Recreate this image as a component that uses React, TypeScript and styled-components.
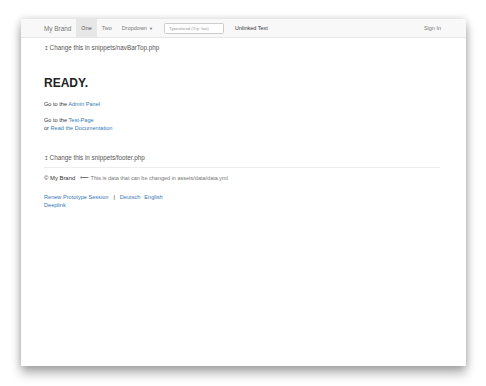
import styled, { createGlobalStyle } from 'styled-components';

const GlobalStyle = createGlobalStyle`
  html, body {
    margin: 0;
    padding: 0;
    background: #ffffff;
  }
  body {
    font-family: "Liberation Sans", Arial, sans-serif;
    color: #333333;
  }
`;

const Stage = styled.div`
  width: 486px;
  height: 386px;
  padding: 19px 20px 20px 21px;
  box-sizing: border-box;
`;

const Window = styled.div`
  width: 445px;
  height: 347px;
  background: #ffffff;
  box-shadow: 0 7px 10px rgba(0, 0, 0, 0.32), 0 0 7px rgba(0, 0, 0, 0.16);
  overflow: hidden;
`;

const NavBar = styled.nav`
  height: 18px;
  background: #f8f8f8;
  border-bottom: 1px solid #e7e7e7;
  display: flex;
  align-items: stretch;
  padding: 0 20px 0 23px;
  font-size: 5.5px;
`;

const Brand = styled.a`
  display: flex;
  align-items: center;
  font-size: 6.4px;
  color: #777777;
  margin-right: 5px;
`;

const NavLink = styled.a<{ $active?: boolean }>`
  display: flex;
  align-items: center;
  padding: 0 5px;
  color: ${(p) => (p.$active ? '#555555' : '#777777')};
  background: ${(p) => (p.$active ? '#e7e7e7' : 'transparent')};
`;

const Caret = styled.span`
  font-size: 4px;
  margin-left: 2px;
`;

const SearchForm = styled.form`
  display: flex;
  align-items: center;
  margin: 0 11px 0 6px;
`;

const SearchInput = styled.input`
  width: 60px;
  height: 11px;
  box-sizing: border-box;
  border: 1px solid #cccccc;
  border-radius: 1.5px;
  padding: 0 4px;
  font-family: "Liberation Sans", Arial, sans-serif;
  font-size: 4.3px;
  background: #ffffff;
  outline: none;
  &::placeholder {
    color: #999999;
  }
`;

const NavText = styled.span`
  display: flex;
  align-items: center;
  color: #333333;
`;

const Spacer = styled.div`
  flex: 1;
`;

const Content = styled.main`
  padding: 0 26px 0 23px;
  font-size: 5.6px;
  line-height: 8px;
`;

const SnippetNote = styled.div<{ $top: number }>`
  margin-top: ${(p) => p.$top}px;
  font-size: 6.3px;
  color: #555555;
`;

const Arrow = styled.span`
  font-family: "DejaVu Sans", sans-serif;
  font-size: 5.5px;
  margin-right: 1px;
`;

const Heading = styled.h1`
  margin: 25px 0 0;
  font-size: 12px;
  line-height: 13px;
  font-weight: 700;
  color: #222222;
`;

const Para = styled.p<{ $top: number }>`
  margin: ${(p) => p.$top}px 0 0;
`;

const Link = styled.a`
  color: #337ab7;
  text-decoration: none;
`;

const Rule = styled.hr`
  margin: 5px 0 0;
  border: 0;
  border-top: 1px solid #eeeeee;
`;

const FooterLine = styled.div`
  margin-top: 6px;
  display: flex;
  align-items: baseline;
  gap: 5px;
`;

const FooterBrand = styled.span`
  color: #333333;
  font-size: 5.9px;
`;

const FooterHint = styled.span`
  color: #777777;
  font-size: 5.5px;
`;

const LinkRow = styled.div<{ $top: number }>`
  margin-top: ${(p) => p.$top}px;
  line-height: 7.5px;
  display: flex;
  gap: 4px;
`;

const Pipe = styled.span`
  color: #333333;
  margin: 0 1px;
`;

const App = () => {
  return (
    <>
      <GlobalStyle />
      <Stage>
        <Window>
          <NavBar>
            <Brand>My Brand</Brand>
            <NavLink $active>One</NavLink>
            <NavLink>Two</NavLink>
            <NavLink>
              Dropdown<Caret>▼</Caret>
            </NavLink>
            <SearchForm>
              <SearchInput placeholder='Typeahead (Try: foo)' />
            </SearchForm>
            <NavText>Unlinked Text</NavText>
            <Spacer />
            <NavLink>Sign In</NavLink>
          </NavBar>
          <Content>
            <SnippetNote $top={6}>
              <Arrow>↥</Arrow>Change this in snippets/navBarTop.php
            </SnippetNote>
            <Heading>READY.</Heading>
            <Para $top={10}>
              Go to the <Link>Admin Panel</Link>
            </Para>
            <Para $top={8}>
              Go to the <Link>Test-Page</Link>
              <br />
              or <Link>Read the Documentation</Link>
            </Para>
            <SnippetNote $top={22}>
              <Arrow>↧</Arrow>Change this in snippets/footer.php
            </SnippetNote>
            <Rule />
            <FooterLine>
              <FooterBrand>© My Brand</FooterBrand>
              <FooterHint>⟵ This is data that can be changed in assets/data/data.yml</FooterHint>
            </FooterLine>
            <LinkRow $top={12}>
              <Link>Renew Prototype Session</Link>
              <Pipe>|</Pipe>
              <Link>Deutsch</Link>
              <Link>English</Link>
            </LinkRow>
            <LinkRow $top={0}>
              <Link>Deeplink</Link>
            </LinkRow>
          </Content>
        </Window>
      </Stage>
    </>
  );
};

export default App;
